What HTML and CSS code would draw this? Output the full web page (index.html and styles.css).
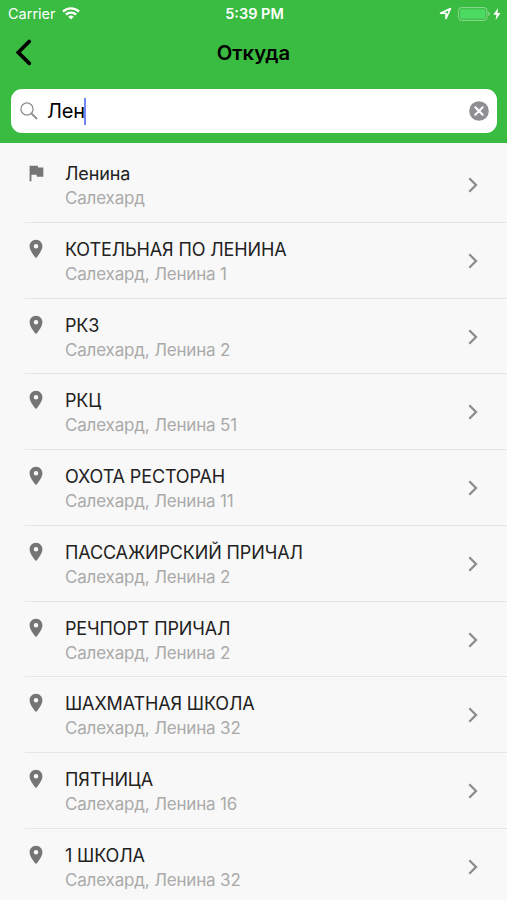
FILE: index.html
```html
<!DOCTYPE html>
<html lang="ru">
<head>
    <meta charset="UTF-8">
    <meta name="viewport" content="width=device-width, initial-scale=1.0">
    <title>Откуда</title>
    <link rel="stylesheet" href="styles.css">
</head>
<body>

<svg class="sprite" width="0" height="0">
    <symbol id="pin" viewBox="0 0 24 24">
        <path fill-rule="evenodd" d="M12 2C8.13 2 5 5.13 5 9c0 5.25 7 13 7 13s7-7.75 7-13c0-3.87-3.13-7-7-7zm0 9.5a2.5 2.5 0 0 1 0-5 2.5 2.5 0 0 1 0 5z"/>
    </symbol>
    <symbol id="flag" viewBox="0 0 24 24">
        <path d="M14.4 6L14 4H5v17h2v-7h5.6l.4 2h7V6z"/>
    </symbol>
    <symbol id="chevron" viewBox="0 0 10 16">
        <path d="M1.3 1.3L8 8l-6.7 6.7" fill="none" stroke="currentColor" stroke-width="2.3"/>
    </symbol>
</svg>

<div class="header">
    <div class="status-bar">
        <div class="status-left">
            <span class="carrier">Carrier</span>
            <svg class="wifi" width="18" height="13" viewBox="0 0 18 13">
                <g fill="none" stroke="#fff" stroke-width="2.4">
                    <path d="M1 4.6a11.5 11.5 0 0 1 16 0"/>
                    <path d="M3.9 7.7a7.3 7.3 0 0 1 10.2 0"/>
                </g>
                <path fill="#fff" d="M9 12.6L6.2 9.8a4 4 0 0 1 5.6 0z"/>
            </svg>
        </div>
        <span class="time">5:39 PM</span>
        <div class="status-right">
            <svg width="13" height="13" viewBox="0 0 13 13">
                <path d="M1.5 6.3L11.5 1.5 7 11.5V6.3z" fill="none" stroke="#fff" stroke-width="1.6" stroke-linejoin="round"/>
            </svg>
            <svg class="battery" width="33" height="14" viewBox="0 0 33 14">
                <rect x="0.6" y="0.6" width="28.3" height="12.8" rx="3" fill="none" stroke="#8fdc92"/>
                <rect x="2.2" y="2.2" width="25.1" height="9.6" rx="1.5" fill="#4cd964"/>
                <path d="M30.3 4.8c2 .6 2 3.800 0 4.4z" fill="#8fdc92"/>
            </svg>
            <svg class="bolt" width="8" height="12" viewBox="0 0 8 12">
                <path d="M5 0L.4 6.7h3L2.6 12 7.6 5H4.5z" fill="#fff"/>
            </svg>
        </div>
    </div>
    <div class="nav-bar">
        <svg class="back" width="18" height="28" viewBox="0 0 18 28">
            <path d="M15.3 3.4L4.2 14.4l11.1 11" fill="none" stroke="#000" stroke-width="3.6" stroke-linecap="round" stroke-linejoin="miter"/>
        </svg>
        <h1>Откуда</h1>
    </div>
    <div class="search">
        <svg class="search-icon" width="18" height="18" viewBox="0 0 18 18">
            <circle cx="7" cy="7" r="6.1" fill="none" stroke="#8e8e93" stroke-width="1.3"/>
            <path d="M11.4 11.4l5.6 5.6" stroke="#8e8e93" stroke-width="1.9"/>
        </svg>
        <span class="query">Лен</span>
        <span class="caret"></span>
        <svg class="clear" width="20" height="20" viewBox="0 0 20 20">
            <circle cx="10" cy="10" r="9.8" fill="#8e8e93"/>
            <path d="M6.3 6.3l7.4 7.4M13.7 6.3l-7.4 7.4" stroke="#fff" stroke-width="2.1" stroke-linecap="round"/>
        </svg>
    </div>
</div>

<div class="list">
    <div class="row">
        <svg class="icon"><use href="#flag"/></svg>
        <div class="text"><div class="name">Ленина</div><div class="address">Салехард</div></div>
        <svg class="chevron"><use href="#chevron"/></svg>
    </div>
    <div class="row">
        <svg class="icon"><use href="#pin"/></svg>
        <div class="text"><div class="name">КОТЕЛЬНАЯ ПО ЛЕНИНА</div><div class="address">Салехард, Ленина 1</div></div>
        <svg class="chevron"><use href="#chevron"/></svg>
    </div>
    <div class="row">
        <svg class="icon"><use href="#pin"/></svg>
        <div class="text"><div class="name">РКЗ</div><div class="address">Салехард, Ленина 2</div></div>
        <svg class="chevron"><use href="#chevron"/></svg>
    </div>
    <div class="row">
        <svg class="icon"><use href="#pin"/></svg>
        <div class="text"><div class="name">РКЦ</div><div class="address">Салехард, Ленина 51</div></div>
        <svg class="chevron"><use href="#chevron"/></svg>
    </div>
    <div class="row">
        <svg class="icon"><use href="#pin"/></svg>
        <div class="text"><div class="name">ОХОТА РЕСТОРАН</div><div class="address">Салехард, Ленина 11</div></div>
        <svg class="chevron"><use href="#chevron"/></svg>
    </div>
    <div class="row">
        <svg class="icon"><use href="#pin"/></svg>
        <div class="text"><div class="name">ПАССАЖИРСКИЙ ПРИЧАЛ</div><div class="address">Салехард, Ленина 2</div></div>
        <svg class="chevron"><use href="#chevron"/></svg>
    </div>
    <div class="row">
        <svg class="icon"><use href="#pin"/></svg>
        <div class="text"><div class="name">РЕЧПОРТ ПРИЧАЛ</div><div class="address">Салехард, Ленина 2</div></div>
        <svg class="chevron"><use href="#chevron"/></svg>
    </div>
    <div class="row">
        <svg class="icon"><use href="#pin"/></svg>
        <div class="text"><div class="name">ШАХМАТНАЯ ШКОЛА</div><div class="address">Салехард, Ленина 32</div></div>
        <svg class="chevron"><use href="#chevron"/></svg>
    </div>
    <div class="row">
        <svg class="icon"><use href="#pin"/></svg>
        <div class="text"><div class="name">ПЯТНИЦА</div><div class="address">Салехард, Ленина 16</div></div>
        <svg class="chevron"><use href="#chevron"/></svg>
    </div>
    <div class="row">
        <svg class="icon"><use href="#pin"/></svg>
        <div class="text"><div class="name">1 ШКОЛА</div><div class="address">Салехард, Ленина 32</div></div>
        <svg class="chevron"><use href="#chevron"/></svg>
    </div>
</div>

</body>
</html>
```
FILE: styles.css
```css
* {
    box-sizing: border-box;
}
body {
    margin: 0;
    height: 900px;
    overflow: hidden;
    background-color: #f8f8f8;
    font-family: Inter, "Liberation Sans", sans-serif;
}
svg {
    display: block;
    flex-shrink: 0;
}
.sprite {
    position: absolute;
}
.header {
    height: 142.5px;
    background-color: #3abb41;
}
.status-bar {
    display: grid;
    grid-template-columns: 1fr auto 1fr;
    align-items: center;
    height: 27px;
    padding: 0 6px 0 8px;
    color: #fff;
    font-size: 14.5px;
}
.status-left,
.status-right {
    display: flex;
    align-items: center;
}
.wifi {
    margin-left: 6px;
}
.time {
    font-weight: 600;
    font-size: 14.5px;
}
.status-right {
    justify-content: flex-end;
}
.battery {
    margin-left: 6px;
}
.bolt {
    margin-left: 2px;
}
.nav-bar {
    display: grid;
    grid-template-columns: 1fr auto 1fr;
    align-items: center;
    height: 50px;
    padding: 0 14px;
}
.nav-bar h1 {
    margin: 0;
    padding-top: 1px;
    font-size: 20.3px;
    font-weight: 600;
}
.search {
    display: flex;
    align-items: center;
    height: 44px;
    margin: 12px 10px 0 11px;
    padding: 0 8px 0 9px;
    background-color: #fff;
    border-radius: 11px;
}
.query {
    margin-left: 9px;
    font-size: 20px;
    letter-spacing: -0.2px;
}
.caret {
    width: 2px;
    height: 27px;
    margin-left: -1px;
    background-color: #7087f5;
}
.clear {
    margin-left: auto;
}
.list {
    padding-top: 4.5px;
}
.row {
    display: flex;
    height: 75.75px;
    margin-left: 25px;
    padding: 15px 29px 0 0;
    border-bottom: 1px solid #e5e5e5;
}
.icon {
    width: 22px;
    height: 22px;
    fill: #757575;
}
.text {
    flex: 1;
    margin-left: 18px;
    white-space: nowrap;
}
.name {
    color: #222;
    font-size: 18px;
    line-height: 24px;
    letter-spacing: -0.13px;
}
.address {
    color: #aaa;
    font-size: 17px;
    line-height: 24px;
    letter-spacing: -0.17px;
}
.chevron {
    width: 10px;
    height: 16px;
    margin-top: 15px;
    color: #8c8c8c;
}
```
